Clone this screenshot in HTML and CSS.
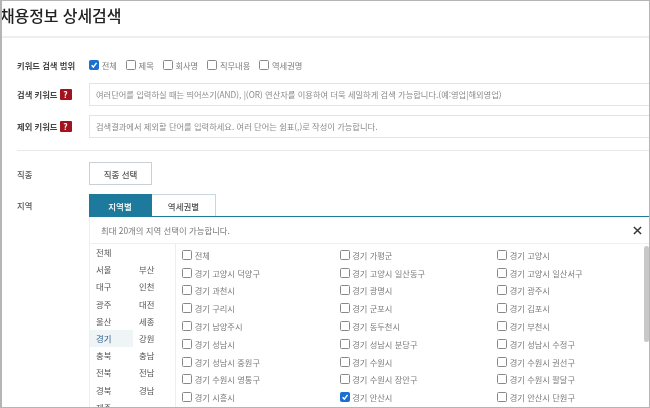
FILE: index.html
```html
<!DOCTYPE html>
<html lang="ko">
<head>
<meta charset="utf-8">
<title>채용정보 상세검색</title>
<link rel="stylesheet" href="styles.css">
</head>
<body>
<div class="frame">
  <h1 class="title">채용정보 상세검색</h1>
  <div class="form">
    <div class="row scope-row">
      <div class="label">키워드 검색 범위</div>
      <div class="scope">
        <label class="check"><span class="box on"><svg viewBox="0 0 10 10"><path d="M2 5.2 4.2 7.6 8.2 2.4"/></svg></span>전체</label>
        <label class="check"><span class="box"></span>제목</label>
        <label class="check"><span class="box"></span>회사명</label>
        <label class="check"><span class="box"></span>직무내용</label>
        <label class="check"><span class="box"></span>역세권명</label>
      </div>
    </div>
    <div class="row kw-row">
      <div class="label">검색 키워드<span class="help">?</span></div>
      <div class="input">여러단어를 입력하실 때는 띄어쓰기(AND), |(OR) 연산자를 이용하여 더욱 세밀하게 검색 가능합니다.(예:영업|해외영업)</div>
    </div>
    <div class="row kw-row second">
      <div class="label">제외 키워드<span class="help">?</span></div>
      <div class="input">검색결과에서 제외할 단어를 입력하세요. 여러 단어는 쉼표(,)로 작성이 가능합니다.</div>
    </div>
    <div class="rule"></div>
    <div class="row job-row">
      <div class="label plain">직종</div>
      <div class="btn">직종 선택</div>
    </div>
    <div class="row area-row">
      <div class="label plain">지역</div>
      <div class="area">
        <div class="tabs">
          <div class="tab active">지역별</div>
          <div class="tab">역세권별</div>
        </div>
        <div class="panel">
          <div class="notice">최대 20개의 지역 선택이 가능합니다.<svg class="close" viewBox="0 0 10 10"><path d="M1 1 9 9M9 1 1 9"/></svg></div>
          <div class="lists">
            <div class="regions">
              <span>전체</span><span></span>
              <span>서울</span><span>부산</span>
              <span>대구</span><span>인천</span>
              <span>광주</span><span>대전</span>
              <span>울산</span><span>세종</span>
              <span class="cur">경기</span><span>강원</span>
              <span>충북</span><span>충남</span>
              <span>전북</span><span>전남</span>
              <span>경북</span><span>경남</span>
              <span>제주</span><span></span>
            </div>
            <div class="cities">
              <label class="check"><span class="box"></span>전체</label>
              <label class="check"><span class="box"></span>경기 가평군</label>
              <label class="check"><span class="box"></span>경기 고양시</label>
              <label class="check"><span class="box"></span>경기 고양시 덕양구</label>
              <label class="check"><span class="box"></span>경기 고양시 일산동구</label>
              <label class="check"><span class="box"></span>경기 고양시 일산서구</label>
              <label class="check"><span class="box"></span>경기 과천시</label>
              <label class="check"><span class="box"></span>경기 광명시</label>
              <label class="check"><span class="box"></span>경기 광주시</label>
              <label class="check"><span class="box"></span>경기 구리시</label>
              <label class="check"><span class="box"></span>경기 군포시</label>
              <label class="check"><span class="box"></span>경기 김포시</label>
              <label class="check"><span class="box"></span>경기 남양주시</label>
              <label class="check"><span class="box"></span>경기 동두천시</label>
              <label class="check"><span class="box"></span>경기 부천시</label>
              <label class="check"><span class="box"></span>경기 성남시</label>
              <label class="check"><span class="box"></span>경기 성남시 분당구</label>
              <label class="check"><span class="box"></span>경기 성남시 수정구</label>
              <label class="check"><span class="box"></span>경기 성남시 중원구</label>
              <label class="check"><span class="box"></span>경기 수원시</label>
              <label class="check"><span class="box"></span>경기 수원시 권선구</label>
              <label class="check"><span class="box"></span>경기 수원시 영통구</label>
              <label class="check"><span class="box"></span>경기 수원시 장안구</label>
              <label class="check"><span class="box"></span>경기 수원시 팔달구</label>
              <label class="check"><span class="box"></span>경기 시흥시</label>
              <label class="check"><span class="box on"><svg viewBox="0 0 10 10"><path d="M2 5.2 4.2 7.6 8.2 2.4"/></svg></span>경기 안산시</label>
              <label class="check"><span class="box"></span>경기 안산시 단원구</label>
            </div>
            <div class="thumb"></div>
          </div>
        </div>
      </div>
    </div>
  </div>
</div>
</body>
</html>
```
FILE: styles.css
```css
* { box-sizing: border-box; }
html, body { margin: 0; padding: 0; background: #fff; }
body { font-family: "Noto Sans CJK KR", "Noto Sans", sans-serif; color: #444; }
.frame {
  width: 650px; height: 408px; overflow: hidden;
  border: 1px solid #b5b5b5; border-left-width: 2px;
  background: #fff;
  filter: blur(0.3px);
}
.title {
  margin: 0 0 0 -2px; height: 37px;
  font-size: 16px; font-weight: 500; line-height: 28px; color: #222;
  letter-spacing: -0.1px;
  border-bottom: 2px solid #eee;
}
.form { padding: 0 0 0 15px; }
.row { display: flex; }
.label {
  width: 72px; flex: none; display: flex; align-items: center;
  font-size: 8.3px; font-weight: 700; color: #444; white-space: nowrap;
}
.label.plain { font-weight: 500; color: #555; }
.scope-row { margin-top: 19px; height: 16px; align-items: center; }
.scope { display: flex; gap: 9px; }
.check {
  display: flex; align-items: center; gap: 2.7px;
  font-size: 8.25px; line-height: 12px; color: #7c7c7c; white-space: nowrap;
}
.box {
  width: 10px; height: 10px; flex: none;
  border: 1px solid #888; border-radius: 1.5px; background: #fff;
  display: block;
}
.box.on { background: #1a6fd0; border-color: #1a6fd0; }
.box svg { display: block; width: 8px; height: 8px; fill: none; stroke: #fff; stroke-width: 1.8; }
.kw-row { margin-top: 10px; height: 22.5px; }
.kw-row.second { margin-top: 9.5px; }
.help {
  width: 12px; height: 11px; margin-left: 2px; border-radius: 1px;
  background: #a3121f; color: #fff; font-size: 8.5px; font-weight: 700; line-height: 11px; text-align: center;
}
.input {
  flex: 1; border: 1px solid #e4e4e4; border-right: 0;
  display: flex; align-items: center; padding-left: 6px;
  font-size: 8.25px; color: #8a8a8a; white-space: nowrap;
}
.rule { height: 1px; background: #e9e9e9; margin-top: 12.5px; }
.job-row { margin-top: 11px; height: 23px; }
.btn {
  width: 63px; border: 1px solid #c9d1d6; display: flex; align-items: center; justify-content: center;
  font-size: 8.5px; font-weight: 500; color: #555;
}
.area-row { margin-top: 9px; }
.area-row > .label { height: 21px; }
.area { flex: 1; min-width: 0; }
.tabs { display: flex; height: 23px; border-bottom: 1px solid #1d7a9c; }
.tab {
  width: 64px; border: 1px solid #c9d6dc; border-bottom: 0; border-left: 0;
  display: flex; align-items: center; justify-content: center;
  font-size: 8.5px; font-weight: 500; color: #555;
}
.tab.active { width: 63px; background: #1d7a9c; border-color: #1d7a9c; color: #fff; }
.panel { border-left: 1px solid #eee; }
.notice {
  height: 27px; border-bottom: 1px solid #f0f0f0; padding-left: 11px;
  display: flex; align-items: center; justify-content: space-between;
  font-size: 8.4px; color: #777;
}
.close { width: 9px; height: 9px; margin-right: 7px; fill: none; stroke: #333; stroke-width: 1.6; }
.lists { display: flex; position: relative; height: 171px; overflow: hidden; }
.regions {
  width: 86px; flex: none; border-right: 1px solid #eee;
  display: grid; grid-template-columns: 43px 43px; grid-auto-rows: 17.2px;
  align-content: start;
}
.regions span { font-size: 8.4px; line-height: 17.2px; padding-left: 6px; color: #555; }
.regions .cur { background: #eff4f7; color: #2a5e8c; }
.cities {
  flex: 1; padding: 2px 0 0 6px;
  display: grid; grid-template-columns: 157.5px 157.5px 1fr; grid-auto-rows: 17.8px;
  align-content: start;
}
.thumb {
  position: absolute; right: 0; top: 2px; width: 5px; height: 96px;
  background: #c8c8c8; border-radius: 3px;
}
```
